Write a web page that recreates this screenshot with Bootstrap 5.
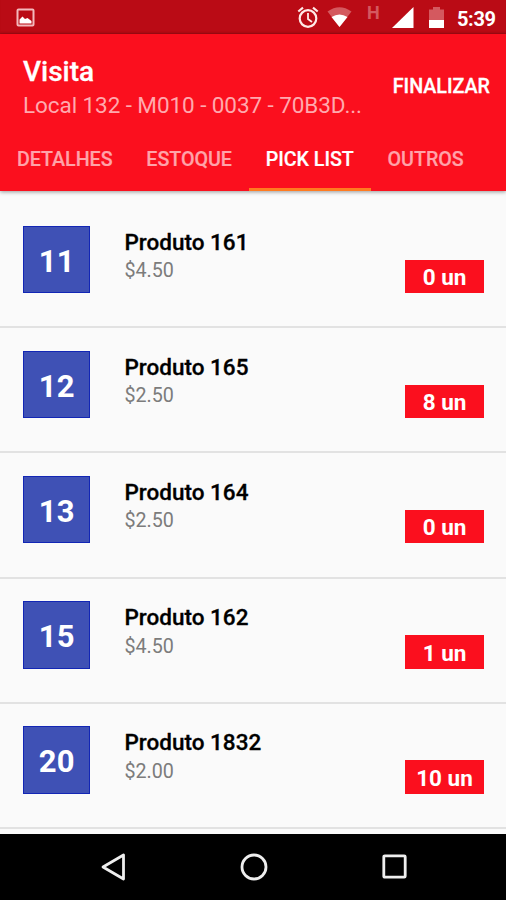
<!DOCTYPE html>
<html lang="pt">
<head>
<meta charset="utf-8">
<meta name="viewport" content="width=device-width, initial-scale=1">
<title>Visita</title>
<link href="https://cdn.jsdelivr.net/npm/bootstrap@5.3.0/dist/css/bootstrap.min.css" rel="stylesheet">
<style>
  body { font-family: Roboto, sans-serif; background: #fafafa; color: #000; line-height: 1; }
  .screen { width: 506px; height: 900px; }
  .status-bar { height: 34px; background: #ba0b15; box-shadow: inset 0 -2px 2px -1px #a00a12; padding: 0 11px 0 16px; }
  .status-bar svg { display: block; flex: none; }
  .status-left { padding-top: 8px; }
  .wifi { margin-left: 8px; }
  .battery { margin-left: 15px; }
  .net-kind { font-size: 18px; font-weight: 700; color: #d4595f; width: 13px; margin: 4px 12px 0 15px; }
  .clock { font-size: 20px; font-weight: 700; width: 38px; margin: 9px 0 0 13px; letter-spacing: -.35px; }
  .app-bar { height: 157px; background: #fb0f1e; box-shadow: 0 1px 4px rgba(0,0,0,.4); z-index: 1; }
  .app-title { height: 91px; padding: 0 16px 0 23px; }
  .title-block { width: 342px; padding-top: 22px; }
  .title-text { font-size: 28px; font-weight: 500; line-height: 32px; -webkit-text-stroke: .3px #fff; }
  .sub-text { font-size: 22.5px; line-height: 28px; margin-top: 3px; color: #ffa9ae; letter-spacing: -.08px; }
  .finish { font-size: 19.7px; font-weight: 500; line-height: 24px; padding-top: 41px; -webkit-text-stroke: .3px #fff; }
  .tabs { height: 66px; font-size: 19.7px; letter-spacing: -.04px; }
  .tabs .nav-link { padding: 23px 16.9px 0; height: 66px; line-height: 24px; font-weight: 500; color: #ffa3a9; border-bottom: 3px solid transparent; -webkit-text-stroke: .2px; }
  .tabs .nav-link.active { color: #fff; border-color: #ff7a20; }
  .items { padding-top: 12.2px; height: 642.5px; background: #fafafa; }
  .item { height: 125.15px; padding: 22.4px 22px 0 23px; border-bottom: 2px solid #e2e2e2; }
  .slot { width: 67.3px; height: 67.5px; background: #3f51b5; border: 1px solid #1226b5; font-size: 31px; font-weight: 700; padding-top: 3.5px; }
  .info { padding-left: 34.2px; }
  .name { font-size: 22.5px; font-weight: 500; line-height: 28px; padding-top: 2px; -webkit-text-stroke: .3px #000; }
  .price { font-size: 19.7px; line-height: 24px; margin-top: 3.5px; color: #7c7c7c; }
  .qty { width: 79px; height: 33.5px; background: #fb0f1e; font-size: 22.5px; font-weight: 700; margin-top: 34px; padding-top: 2px; }
  .nav-bar { height: 66.5px; background: #000; padding-left: 101px; }
  .nav-home { margin-left: 112.5px; }
  .nav-recent { margin-left: 114px; }
</style>
</head>
<body>
<div class="screen d-flex flex-column overflow-hidden">
  <div class="status-bar d-flex align-items-start text-white flex-shrink-0">
    <div class="status-left me-auto">
      <svg width="19" height="19" viewBox="0 0 19 19"><rect x="1.5" y="1.5" width="16" height="16" rx="1" fill="none" stroke="#f3b9bc" stroke-width="2"/><path d="M3.500 15.500V11.500L6.500 8.500L9 11L11.500 10L15.500 13V15.500Z" fill="#fff"/></svg>
    </div>
    <svg width="22" height="34" viewBox="0 0 22 34" fill="none" stroke="#ffe9e6" stroke-width="2.200"><circle cx="11" cy="18.500" r="8.300"/><path d="M1.300 11.500L6 7.700M20.700 11.500L16 7.700"/><path d="M11 13v6l4 3" stroke-width="1.800"/></svg>
    <svg class="wifi" width="25" height="34" viewBox="0 0 25 34"><path d="M.5 11.500Q12.500 3 24.500 11.500L12.500 27Z" fill="#d4595f"/><path d="M4.500 17Q12.500 12 20.500 17L12.500 27Z" fill="#fff"/></svg>
    <div class="net-kind">H</div>
    <svg width="22" height="34" viewBox="0 0 22 34"><path d="M0 28L21.500 7V28Z" fill="#fff"/></svg>
    <svg class="battery" width="15" height="34" viewBox="0 0 15 34"><path d="M0 9.500H4V7H11V9.500H15V20H0Z" fill="#d4595f"/><path d="M0 20H15V28H0Z" fill="#fff"/></svg>
    <div class="clock">5:39</div>
  </div>

  <header class="app-bar position-relative flex-shrink-0 text-white">
    <div class="app-title d-flex justify-content-between">
      <div class="title-block">
        <div class="title-text">Visita</div>
        <div class="sub-text text-nowrap">Local 132 - M010 - 0037 - 70B3D...</div>
      </div>
      <div class="finish">FINALIZAR</div>
    </div>
    <nav class="tabs nav flex-nowrap text-nowrap">
      <a class="nav-link" href="#">DETALHES</a>
      <a class="nav-link" href="#">ESTOQUE</a>
      <a class="nav-link active" href="#">PICK LIST</a>
      <a class="nav-link" href="#">OUTROS</a>
    </nav>
  </header>

  <main class="items flex-shrink-0">
    <div class="item d-flex"><div class="slot d-flex align-items-center justify-content-center text-white">11</div><div class="info me-auto"><div class="name">Produto 161</div><div class="price">$4.50</div></div><div class="qty d-flex align-items-center justify-content-center text-white">0 un</div></div>
    <div class="item d-flex"><div class="slot d-flex align-items-center justify-content-center text-white">12</div><div class="info me-auto"><div class="name">Produto 165</div><div class="price">$2.50</div></div><div class="qty d-flex align-items-center justify-content-center text-white">8 un</div></div>
    <div class="item d-flex"><div class="slot d-flex align-items-center justify-content-center text-white">13</div><div class="info me-auto"><div class="name">Produto 164</div><div class="price">$2.50</div></div><div class="qty d-flex align-items-center justify-content-center text-white">0 un</div></div>
    <div class="item d-flex"><div class="slot d-flex align-items-center justify-content-center text-white">15</div><div class="info me-auto"><div class="name">Produto 162</div><div class="price">$4.50</div></div><div class="qty d-flex align-items-center justify-content-center text-white">1 un</div></div>
    <div class="item d-flex"><div class="slot d-flex align-items-center justify-content-center text-white">20</div><div class="info me-auto"><div class="name">Produto 1832</div><div class="price">$2.00</div></div><div class="qty d-flex align-items-center justify-content-center text-white">10 un</div></div>
  </main>

  <footer class="nav-bar d-flex align-items-center flex-shrink-0">
    <svg width="26" height="28" viewBox="0 0 26 28" fill="none" stroke="#eee" stroke-width="2.800" stroke-linejoin="round"><path d="M22.500 2V26L2 14Z"/></svg>
    <svg class="nav-home" width="28" height="28" viewBox="0 0 28 28" fill="none" stroke="#eee" stroke-width="2.800"><circle cx="14" cy="14" r="12"/></svg>
    <svg class="nav-recent" width="25" height="25" viewBox="0 0 25 25" fill="none" stroke="#eee" stroke-width="2.800"><rect x="1.800" y="1.800" width="21.400" height="21.400" rx="1"/></svg>
  </footer>
</div>
<script src="https://cdn.jsdelivr.net/npm/bootstrap@5.3.0/dist/js/bootstrap.bundle.min.js"></script>
</body>
</html>
